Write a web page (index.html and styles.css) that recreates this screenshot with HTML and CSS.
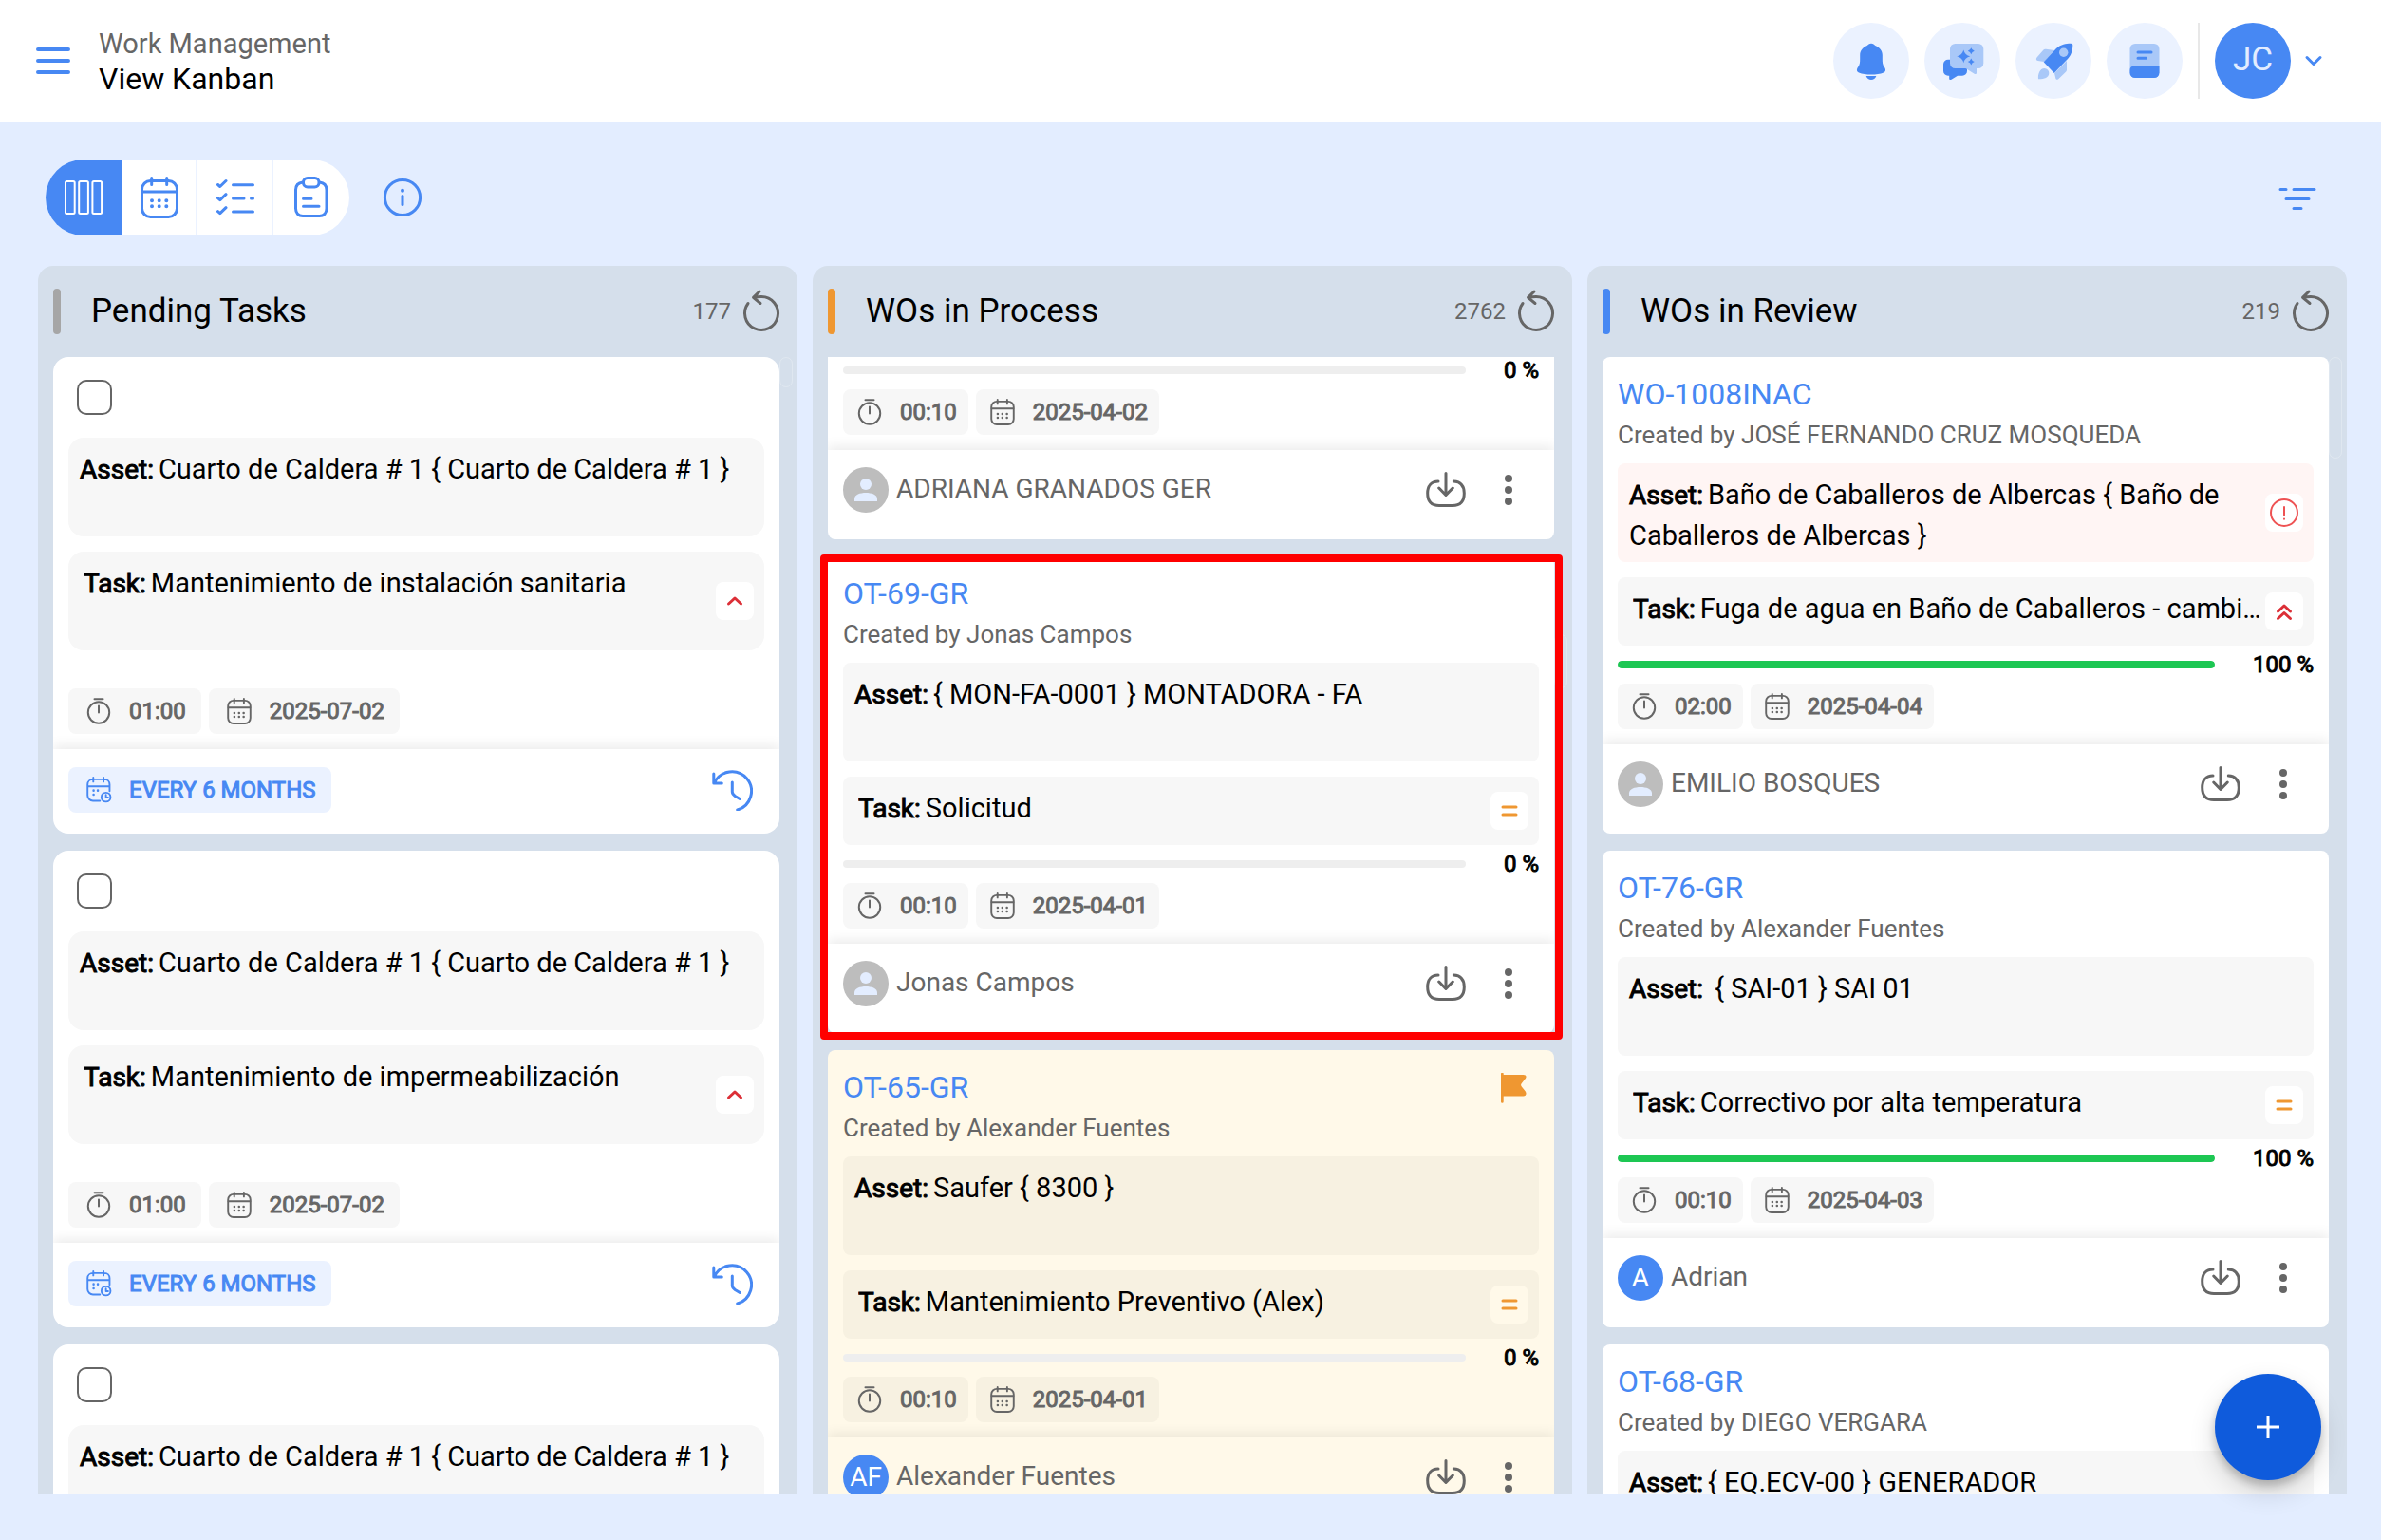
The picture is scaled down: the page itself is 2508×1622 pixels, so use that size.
FILE: index.html
```html
<!DOCTYPE html>
<html lang="en">
<head>
    <meta charset="UTF-8">
    <title>Work Management - View Kanban</title>
    <link rel="stylesheet" href="styles.css">
</head>
<body>
    <!-- shared icons -->
    <svg class="sprite" aria-hidden="true">
        <symbol id="i-reload" viewBox="0 0 48 48">
            <path d="M16 9.3Q20 8.5 24 8.5A17.5 17.5 0 1 1 10 15.5M22 3L15.5 9.3L23 15.5"/>
        </symbol>
        <symbol id="i-calendar" viewBox="0 0 40 44">
            <rect x="1.5" y="4.5" width="37" height="38" rx="9"/>
            <path d="M11.7 1.5v7M27.7 1.5v7M2 16h36"/>
            <path class="dots" d="M12 25.3h.01M19.7 25.3h.01M27.3 25.3h.01M12 31.3h.01M19.7 31.3h.01M27.3 31.3h.01"/>
        </symbol>
        <symbol id="i-calendar-clock" viewBox="0 0 40 44">
            <path d="M38 24V13c0-5-3.500-8.500-8.500-8.500H10.500c-5 0-9 3.500-9 8.500v18c0 5 4 9 9 9H22M11 1.500v7M28 1.500v7M2 16h36"/>
            <path class="dots" d="M11.500 23h.01M18.500 23h.01M11.500 30h.01"/>
            <circle cx="32" cy="34" r="7.500"/>
            <path d="M32 30v4.500h3.500"/>
        </symbol>
        <symbol id="i-timer" viewBox="0 0 28 28">
            <path d="M9.500 1.200h9M14 8.500v7"/>
            <circle cx="14" cy="15.500" r="11.200"/>
        </symbol>
        <symbol id="i-history" viewBox="0 0 44 44">
            <path d="M2.800 5v10h8.500M3.500 14.500A20.500 20.500 0 1 1 27.700 43M22.300 14v10c0 2 1 3 3 4.500l5 3"/>
        </symbol>
        <symbol id="i-download" viewBox="0 0 42 38">
            <path d="M13 10C5.500 10 1.700 15 1.700 22.500C1.700 31 5.500 35.500 14 35.500H28c8.500 0 12.300-4.500 12.300-13C40.300 15 36.500 10.200 29.300 10M21 1.500v22.500M13.700 17l7.300 7.500 7.300-7.500"/>
        </symbol>
        <symbol id="i-more" viewBox="0 0 16 34">
            <circle cx="8" cy="5" r="4"/><circle cx="8" cy="17" r="4"/><circle cx="8" cy="29" r="4"/>
        </symbol>
        <symbol id="i-high" viewBox="0 0 40 40"><path d="M13.500 23l6.500-6 6.500 6"/></symbol>
        <symbol id="i-highest" viewBox="0 0 40 40"><path d="M13.500 20l6.500-6 6.500 6M13.500 27.500l6.500-6 6.500 6"/></symbol>
        <symbol id="i-medium" viewBox="0 0 40 40"><path d="M13 16h14M13 24h14"/></symbol>
        <symbol id="i-alert" viewBox="0 0 40 40"><circle cx="20" cy="20" r="14"/><path d="M20 14v8.500M20 26.500v.2"/></symbol>
        <symbol id="i-person" viewBox="0 0 48 48">
            <circle cx="24" cy="18" r="6"/><path d="M12 36v-2.500c0-4.500 6-6.500 12-6.500s12 2 12 6.500V36z"/>
        </symbol>
        <symbol id="i-flag" viewBox="0 0 28 32">
            <path d="M0 1a1.300 1.300 0 0 1 2.700 0v1H23.500c3 0 3.800 2 2.300 4l-4 5c-1 1.200-1 2.300 0 3.500l4 5c1.500 2.500.7 5-2.300 5H2.700v6a1.300 1.300 0 0 1-2.700 0z"/>
        </symbol>
    </svg>

    <header class="topbar">
        <button class="icon-btn menu-btn" aria-label="Menu">
            <svg width="36" height="30" viewBox="0 0 36 30"><path d="M2 3h32M2 15h32M2 27h32"/></svg>
        </button>
        <div class="page-title">
            <p>Work Management</p>
            <h1>View Kanban</h1>
        </div>
        <div class="top-actions">
            <button class="round-btn" aria-label="Notifications">
                <svg viewBox="0 0 40 40">
                    <path class="dark" d="M20 1.800c2 0 3.300 1 4.300 2.300C28.800 6 31.800 9.500 31.800 14v4c0 4 .2 6 2 8.500 2 3 1.500 5-.8 6C29.500 34 25 34.500 20 34.500S10.500 34 7 32.500c-2.300-1-2.800-3-.8-6 1.800-2.500 2-4.500 2-8.500v-4c0-4.500 3-8 7.500-9.900C16.700 2.800 18 1.800 20 1.800z"/>
                    <path class="dark" d="M14.600 36h10.800c-1 2.700-3 4-5.400 4s-4.400-1.300-5.400-4z"/>
                </svg>
            </button>
            <button class="round-btn" aria-label="Assistant">
                <svg viewBox="0 0 40 40">
                    <path class="dark" d="M5 18.700h15a5 5 0 0 1 5 5v7a5 5 0 0 1-5 5h-5L8.500 39.700c-1.200.7-2.300.3-2.300-1v-3H5a5 5 0 0 1-5-5v-7a5 5 0 0 1 5-5z"/>
                    <path class="light" d="M12.500 2h24.300a5.500 5.500 0 0 1 5.500 5.500v15a5.500 5.500 0 0 1-5.500 5.500H35v4.500c0 1.500-1 2-2.300 1.300L23.500 28h-11A5.500 5.500 0 0 1 7 22.500v-15A5.500 5.500 0 0 1 12.500 2z"/>
                    <path class="dark" d="M21.300 8.500q1.300 5.500 7 6.800q-5.700 1.300-7 7q-1.300-5.700-7-7q5.700-1.300 7-6.800zM29.300 6.200q.8 2.700 3.500 3.500q-2.700.8-3.500 3.500q-.8-2.700-3.500-3.500q2.700-.8 3.500-3.500zM29.300 17.500q.8 2.700 3.500 3.500q-2.700.8-3.500 3.500q-.8-2.700-3.500-3.500q2.700-.8 3.500-3.500z"/>
                </svg>
            </button>
            <button class="round-btn" aria-label="Getting started">
                <svg viewBox="0 0 40 40">
                    <path class="light" d="M10 21L3.500 20c-2-.5-2-2-1-3.500l7-8c.6-.8 1.500-1 2.500-.8l9 1.300zM21 33l13-13v9.500c0 .8-.2 1.500-.8 2l-8 7.700c-1.200 1-2.500.8-2.900-.7zM4 39.300C3.500 34 5.500 28 10.500 28a5 5 0 0 1 4.800 5c0 5-5.800 6.500-11.300 6.300z"/>
                    <path class="dark" d="M9.700 21.300L23 7c5-4.500 10-5.300 15-5.300 2 0 2.300.8 2.300 2.300-.3 6-1.800 10-5.300 14L20.700 33z"/>
                    <circle class="light" cx="30.700" cy="11.300" r="4.700"/>
                </svg>
            </button>
            <button class="round-btn" aria-label="Documentation">
                <svg viewBox="0 0 40 40">
                    <rect class="light" x="4.500" y="2" width="31" height="36" rx="5.500"/>
                    <path class="dark" d="M9 25.500h26.500v7a5.500 5.500 0 0 1-5.500 5.500H10a5.500 5.500 0 0 1-5.500-5.500V30c0-3 1.500-4.500 4.500-4.500z"/>
                    <path class="line" d="M13 11h14M13 17.300h8.500"/>
                </svg>
            </button>
            <button class="account">
                <span class="account-avatar">JC</span>
                <svg width="18" height="12" viewBox="0 0 18 12"><path d="M2 2.500l7 7 7-7"/></svg>
            </button>
        </div>
    </header>

    <main>
        <div class="toolbar">
            <div class="view-switch">
                <button class="active" aria-label="Kanban">
                    <svg width="40" height="40" viewBox="0 0 40 40"><rect x="1" y="3" width="9.700" height="34" rx="1.500"/><rect x="15.200" y="3" width="9.700" height="34" rx="1.500"/><rect x="29.400" y="3" width="9.700" height="34" rx="1.500"/></svg>
                </button>
                <button aria-label="Calendar"><svg width="40" height="44"><use href="#i-calendar"/></svg></button>
                <button aria-label="List">
                    <svg width="40" height="40" viewBox="0 0 40 40"><path d="M1.500 6.500l2.300 2L10 2.500M17.500 6.700H38.500M1.500 20.700l2.300 2L10 16.700M17.500 21H29M36.500 21h2M1.500 34.700l2.300 2L10 30.700M17.500 35H38.500"/></svg>
                </button>
                <button aria-label="Requests">
                    <svg width="36" height="44" viewBox="0 0 36 44"><rect x="9.500" y="1.500" width="16.500" height="9.500" rx="4.500"/><path d="M9 6C4 6.500 1.500 9 1.500 14v19.500c0 5 3 8 7.500 8h17.500c4.500 0 7.500-3 7.500-8V14c0-5-2.500-7.500-7.500-8M9.500 23.300H18M9.500 31.300h16.500"/></svg>
                </button>
            </div>
            <button class="icon-btn info-btn" aria-label="Information">
                <svg width="40" height="40" viewBox="0 0 40 40"><circle cx="20" cy="20" r="18.600"/><path d="M20 18.500v9"/><circle class="dot" cx="20" cy="12.700" r="2"/></svg>
            </button>
            <button class="icon-btn filter-btn" aria-label="Filters">
                <svg width="40" height="26" viewBox="0 0 40 26"><path d="M2 4.500h6M16 4.500h22M8 14.500h24M16 24.500h8"/></svg>
            </button>
        </div>

        <div class="board">
            <!-- Pending -->
            <section class="column pending">
                <div class="column-head">
                    <h2>Pending Tasks</h2>
                    <span class="count">177</span>
                    <button class="icon-btn reload" aria-label="Reload"><svg width="48" height="48"><use href="#i-reload"/></svg></button>
                </div>
                <div class="scroll-thumb" style="top: 96px; height: 32px"></div>
                <div class="card-list">
                    <article class="card">
                        <label class="select"><input type="checkbox" aria-label="Select task"></label>
                        <div class="field asset"><p><b>Asset:</b>Cuarto de Caldera # 1 { Cuarto de Caldera # 1 }</p></div>
                        <div class="field task"><p><b>Task:</b>Mantenimiento de instalación sanitaria</p><svg class="badge red"><use href="#i-high"/></svg></div>
                        <div class="chips">
                            <span class="chip"><svg><use href="#i-timer"/></svg>01:00</span>
                            <span class="chip"><svg class="cal"><use href="#i-calendar"/></svg>2025-07-02</span>
                        </div>
                        <footer>
                            <span class="chip period"><svg class="cal"><use href="#i-calendar-clock"/></svg>EVERY 6 MONTHS</span>
                            <button class="icon-btn history" aria-label="History"><svg width="44" height="44"><use href="#i-history"/></svg></button>
                        </footer>
                    </article>
                    <article class="card">
                        <label class="select"><input type="checkbox" aria-label="Select task"></label>
                        <div class="field asset"><p><b>Asset:</b>Cuarto de Caldera # 1 { Cuarto de Caldera # 1 }</p></div>
                        <div class="field task"><p><b>Task:</b>Mantenimiento de impermeabilización</p><svg class="badge red"><use href="#i-high"/></svg></div>
                        <div class="chips">
                            <span class="chip"><svg><use href="#i-timer"/></svg>01:00</span>
                            <span class="chip"><svg class="cal"><use href="#i-calendar"/></svg>2025-07-02</span>
                        </div>
                        <footer>
                            <span class="chip period"><svg class="cal"><use href="#i-calendar-clock"/></svg>EVERY 6 MONTHS</span>
                            <button class="icon-btn history" aria-label="History"><svg width="44" height="44"><use href="#i-history"/></svg></button>
                        </footer>
                    </article>
                    <article class="card">
                        <label class="select"><input type="checkbox" aria-label="Select task"></label>
                        <div class="field asset"><p><b>Asset:</b>Cuarto de Caldera # 1 { Cuarto de Caldera # 1 }</p></div>
                    </article>
                </div>
            </section>

            <!-- In process -->
            <section class="column process">
                <div class="column-head">
                    <h2>WOs in Process</h2>
                    <span class="count">2762</span>
                    <button class="icon-btn reload" aria-label="Reload"><svg width="48" height="48"><use href="#i-reload"/></svg></button>
                </div>
                <div class="scroll-thumb" style="top: 388px; height: 57px"></div>
                <div class="card-list" id="processList">
                    <article class="card">
                        <div class="card-head"></div>
                        <div class="field asset"></div>
                        <div class="field task"></div>
                        <div class="progress"><div class="track"><div class="fill" style="width: 0%"></div></div><span>0 %</span></div>
                        <div class="chips">
                            <span class="chip"><svg><use href="#i-timer"/></svg>00:10</span>
                            <span class="chip"><svg class="cal"><use href="#i-calendar"/></svg>2025-04-02</span>
                        </div>
                        <footer>
                            <span class="avatar"><svg><use href="#i-person"/></svg></span>
                            <span class="name">ADRIANA GRANADOS GER</span>
                            <button class="icon-btn download" aria-label="Download"><svg width="42" height="38"><use href="#i-download"/></svg></button>
                            <button class="icon-btn more" aria-label="More"><svg width="16" height="34"><use href="#i-more"/></svg></button>
                        </footer>
                    </article>
                    <div class="highlight">
                        <article class="card">
                            <div class="card-head">
                                <h3><a href="#">OT-69-GR</a></h3>
                                <p>Created by Jonas Campos</p>
                            </div>
                            <div class="field asset"><p><b>Asset:</b>{ MON-FA-0001 } MONTADORA - FA</p></div>
                            <div class="field task"><p><b>Task:</b>Solicitud</p><svg class="badge orange"><use href="#i-medium"/></svg></div>
                            <div class="progress"><div class="track"><div class="fill" style="width: 0%"></div></div><span>0 %</span></div>
                            <div class="chips">
                                <span class="chip"><svg><use href="#i-timer"/></svg>00:10</span>
                                <span class="chip"><svg class="cal"><use href="#i-calendar"/></svg>2025-04-01</span>
                            </div>
                            <footer>
                                <span class="avatar"><svg><use href="#i-person"/></svg></span>
                                <span class="name">Jonas Campos</span>
                                <button class="icon-btn download" aria-label="Download"><svg width="42" height="38"><use href="#i-download"/></svg></button>
                                <button class="icon-btn more" aria-label="More"><svg width="16" height="34"><use href="#i-more"/></svg></button>
                            </footer>
                        </article>
                    </div>
                    <article class="card flagged">
                        <svg class="flag"><use href="#i-flag"/></svg>
                        <div class="card-head">
                            <h3><a href="#">OT-65-GR</a></h3>
                            <p>Created by Alexander Fuentes</p>
                        </div>
                        <div class="field asset"><p><b>Asset:</b>Saufer { 8300 }</p></div>
                        <div class="field task"><p><b>Task:</b>Mantenimiento Preventivo (Alex)</p><svg class="badge orange"><use href="#i-medium"/></svg></div>
                        <div class="progress"><div class="track"><div class="fill" style="width: 0%"></div></div><span>0 %</span></div>
                        <div class="chips">
                            <span class="chip"><svg><use href="#i-timer"/></svg>00:10</span>
                            <span class="chip"><svg class="cal"><use href="#i-calendar"/></svg>2025-04-01</span>
                        </div>
                        <footer>
                            <span class="avatar initials">AF</span>
                            <span class="name">Alexander Fuentes</span>
                            <button class="icon-btn download" aria-label="Download"><svg width="42" height="38"><use href="#i-download"/></svg></button>
                            <button class="icon-btn more" aria-label="More"><svg width="16" height="34"><use href="#i-more"/></svg></button>
                        </footer>
                    </article>
                </div>
            </section>

            <!-- In review -->
            <section class="column review">
                <div class="column-head">
                    <h2>WOs in Review</h2>
                    <span class="count">219</span>
                    <button class="icon-btn reload" aria-label="Reload"><svg width="48" height="48"><use href="#i-reload"/></svg></button>
                </div>
                <div class="scroll-thumb" style="top: 96px; height: 107px"></div>
                <div class="card-list">
                    <article class="card">
                        <div class="card-head">
                            <h3><a href="#">WO-1008INAC</a></h3>
                            <p>Created by JOSÉ FERNANDO CRUZ MOSQUEDA</p>
                        </div>
                        <div class="field asset stopped"><p><b>Asset:</b>Baño de Caballeros de Albercas { Baño de Caballeros de Albercas }</p><svg class="badge alert"><use href="#i-alert"/></svg></div>
                        <div class="field task"><p><b>Task:</b>Fuga de agua en Baño de Caballeros - cambio de llave</p><svg class="badge red"><use href="#i-highest"/></svg></div>
                        <div class="progress"><div class="track"><div class="fill" style="width: 100%"></div></div><span>100 %</span></div>
                        <div class="chips">
                            <span class="chip"><svg><use href="#i-timer"/></svg>02:00</span>
                            <span class="chip"><svg class="cal"><use href="#i-calendar"/></svg>2025-04-04</span>
                        </div>
                        <footer>
                            <span class="avatar"><svg><use href="#i-person"/></svg></span>
                            <span class="name">EMILIO BOSQUES</span>
                            <button class="icon-btn download" aria-label="Download"><svg width="42" height="38"><use href="#i-download"/></svg></button>
                            <button class="icon-btn more" aria-label="More"><svg width="16" height="34"><use href="#i-more"/></svg></button>
                        </footer>
                    </article>
                    <article class="card">
                        <div class="card-head">
                            <h3><a href="#">OT-76-GR</a></h3>
                            <p>Created by Alexander Fuentes</p>
                        </div>
                        <div class="field asset"><p><b>Asset:</b>&nbsp;{ SAI-01 } SAI 01</p></div>
                        <div class="field task"><p><b>Task:</b>Correctivo por alta temperatura</p><svg class="badge orange"><use href="#i-medium"/></svg></div>
                        <div class="progress"><div class="track"><div class="fill" style="width: 100%"></div></div><span>100 %</span></div>
                        <div class="chips">
                            <span class="chip"><svg><use href="#i-timer"/></svg>00:10</span>
                            <span class="chip"><svg class="cal"><use href="#i-calendar"/></svg>2025-04-03</span>
                        </div>
                        <footer>
                            <span class="avatar initials">A</span>
                            <span class="name">Adrian</span>
                            <button class="icon-btn download" aria-label="Download"><svg width="42" height="38"><use href="#i-download"/></svg></button>
                            <button class="icon-btn more" aria-label="More"><svg width="16" height="34"><use href="#i-more"/></svg></button>
                        </footer>
                    </article>
                    <article class="card">
                        <div class="card-head">
                            <h3><a href="#">OT-68-GR</a></h3>
                            <p>Created by DIEGO VERGARA</p>
                        </div>
                        <div class="field asset"><p><b>Asset:</b>{ EQ.ECV-00 } GENERADOR</p></div>
                    </article>
                </div>
            </section>
        </div>
    </main>

    <button class="fab" aria-label="Add">
        <svg width="24" height="24" viewBox="0 0 24 24"><path d="M12 0v24M0 12h24"/></svg>
    </button>

    <script>
        // the in-process list opens part way down its first card
        document.getElementById('processList').scrollTop = 310;
    </script>
</body>
</html>
```

FILE: styles.css
```css
* {
    box-sizing: border-box;
}
body {
    margin: 0;
    height: 100vh;
    display: flex;
    flex-direction: column;
    background-color: #e3edff;
    font-family: Roboto, "Liberation Sans", sans-serif;
    font-size: 28px;
    color: #000;
}
h1, h2, h3, p {
    margin: 0;
    font-weight: 400;
}
button {
    font: inherit;
    color: inherit;
    border: 0;
    padding: 0;
    background: none;
    cursor: pointer;
}
svg {
    display: block;
    flex-shrink: 0;
    fill: none;
    stroke: currentColor;
    stroke-linecap: round;
    stroke-linejoin: round;
    overflow: visible;
}
.sprite {
    position: absolute;
    width: 0;
    height: 0;
}
.dots {
    stroke-width: 4px;
}
.icon-btn {
    color: #4788f3;
}

/* top bar */
.topbar {
    display: flex;
    align-items: center;
    height: 128px;
    flex-shrink: 0;
    padding: 0 62px 0 38px;
    background-color: #fff;
}
.menu-btn {
    margin-right: 30px;
    stroke-width: 4px;
}
.page-title {
    padding-top: 2px;
    line-height: 37px;
}
.page-title p {
    font-size: 29px;
    color: #666;
}
.page-title h1 {
    font-size: 32px;
}
.top-actions {
    display: flex;
    align-items: center;
    gap: 16px;
    margin-left: auto;
}
.round-btn {
    width: 80px;
    height: 80px;
    border-radius: 50%;
    background-color: #ebf2ff;
}
.round-btn svg {
    width: 40px;
    height: 40px;
    margin: 0 auto;
    stroke: none;
}
.round-btn .dark {
    fill: #4788f3;
}
.round-btn .light {
    fill: #a9c8f8;
}
.round-btn .line {
    stroke: #4788f3;
    stroke-width: 3px;
}
.account {
    display: flex;
    align-items: center;
    gap: 15px;
    padding-left: 16px;
    border-left: 2px solid #e8e8e8;
    color: #4788f3;
    stroke-width: 3px;
}
.account-avatar {
    width: 80px;
    border-radius: 50%;
    background-color: #4788f3;
    color: #e3edff;
    font-size: 35px;
    line-height: 78px;
    padding-bottom: 2px;
}

/* toolbar */
main {
    display: flex;
    flex-direction: column;
    flex: 1;
    min-height: 0;
    padding: 40px 36px 48px 40px;
}
.toolbar {
    display: flex;
    align-items: center;
    margin-bottom: 32px;
    padding: 0 32px 0 8px;
}
.view-switch {
    display: flex;
    border-radius: 40px;
    overflow: hidden;
    background-color: #fff;
}
.view-switch button {
    width: 80px;
    height: 80px;
    box-shadow: inset -2px 0 #ebf2ff;
    color: #4788f3;
    stroke-width: 3px;
}
.view-switch button:last-child {
    box-shadow: none;
}
.view-switch button.active {
    box-shadow: none;
    background-color: #4788f3;
    color: #fff;
    stroke-width: 2px;
}
.view-switch svg {
    margin: 0 auto;
}
.info-btn {
    margin-left: 36px;
    stroke-width: 3px;
}
.info-btn .dot {
    fill: #4788f3;
    stroke: none;
}
.filter-btn {
    margin-left: auto;
    stroke-width: 3px;
}

/* board */
.board {
    display: grid;
    grid-template-columns: repeat(3, minmax(0, 1fr));
    grid-template-rows: 100%;
    gap: 16px;
    flex: 1;
    min-height: 0;
}
.column {
    position: relative;
    display: flex;
    flex-direction: column;
    border-radius: 16px 16px 0 0;
    background-color: #d5dfeb;
}
.column-head {
    display: flex;
    align-items: center;
    height: 96px;
    flex-shrink: 0;
    padding: 0 14px 0 16px;
}
.column-head::before {
    content: "";
    width: 8px;
    height: 48px;
    margin-right: 32px;
    border-radius: 4px;
    background-color: #a6a6a6;
}
.process .column-head::before {
    background-color: #ef9731;
}
.review .column-head::before {
    background-color: #4788f3;
}
.column-head h2 {
    font-size: 35px;
    line-height: 40px;
}
.count {
    margin-left: auto;
    margin-right: 8px;
    font-size: 24px;
    color: #666;
}
.reload {
    color: #666;
    stroke-width: 3px;
}
.scroll-thumb {
    position: absolute;
    right: 5px;
    width: 14px;
    border: 1px solid rgba(255, 255, 255, 0.25);
    border-radius: 7px;
}
.card-list {
    display: flex;
    flex-direction: column;
    gap: 18px;
    flex: 1;
    min-height: 0;
    padding: 0 19px 0 16px;
    overflow-y: auto;
    scrollbar-width: none;
}

/* cards */
.card {
    position: relative;
    flex-shrink: 0;
    padding: 20px 16px 0;
    border-radius: 8px;
    background-color: #fff;
    overflow: hidden;
}
.highlight {
    position: relative;
    flex-shrink: 0;
}
.highlight::after {
    content: "";
    position: absolute;
    inset: -2px -9px -7px -8px;
    border: 8px solid #f00;
    border-radius: 4px;
}
.card-head {
    display: flex;
    flex-direction: column;
    gap: 6px;
    height: 92px;
}
.card h3 {
    font-size: 32px;
    line-height: 38px;
}
.card h3 a {
    color: #4788f3;
    text-decoration: none;
}
.card-head p {
    font-size: 26px;
    line-height: 36px;
    color: #666;
}
.flag {
    position: absolute;
    top: 24px;
    right: 28px;
    width: 28px;
    height: 32px;
    fill: #ef9731;
    stroke: none;
}
.field {
    display: flex;
    align-items: center;
    gap: 4px;
    margin-bottom: 16px;
    padding: 0 11px 0 12px;
    border-radius: 8px;
    background-color: #f7f7f7;
    font-size: 29px;
    line-height: 43px;
}
.field p {
    flex: 1;
    align-self: flex-start;
    padding-top: 12px;
}
.field b {
    margin-right: 5px;
    font-size: 28px;
    font-weight: 400;
    -webkit-text-stroke: 1px currentColor;
}
.asset {
    height: 104px;
}
.task {
    height: 72px;
    padding-left: 16px;
}
.task p {
    overflow: hidden;
    white-space: nowrap;
    text-overflow: ellipsis;
}
.stopped {
    background-color: #fff5f4;
}
.badge {
    width: 40px;
    height: 40px;
    border-radius: 8px;
    background-color: #fff;
    stroke-width: 3px;
}
.red {
    color: #dc2f37;
}
.orange {
    color: #ef9731;
}
.alert {
    color: #ee5253;
    stroke-width: 2px;
}
.progress {
    display: flex;
    align-items: center;
    gap: 40px;
    margin: -8px 0 8px;
    font-size: 24px;
    line-height: 24px;
}
.progress span {
    -webkit-text-stroke: 1px currentColor;
}
.track {
    flex: 1;
    height: 8px;
    border-radius: 4px;
    background-color: #eee;
    overflow: hidden;
}
.fill {
    height: 8px;
    border-radius: 4px;
    background-color: #1dc753;
}
.chips {
    display: flex;
    gap: 8px;
    margin-bottom: 16px;
}
.chip {
    display: flex;
    align-items: center;
    gap: 18px;
    height: 48px;
    padding: 0 12px 0 14px;
    border-radius: 8px;
    background-color: #f7f7f7;
    color: #666;
    font-size: 24px;
    stroke-width: 2px;
    -webkit-text-stroke: 1px currentColor;
}
.chip svg {
    width: 28px;
    height: 28px;
}
.chip .cal {
    stroke-width: 3px;
}
.card footer {
    display: flex;
    align-items: center;
    height: 94px;
    margin: 0 -16px;
    padding: 0 40px 10px 16px;
    box-shadow: 0 -4px 12px rgba(0, 0, 0, 0.08);
}
.avatar {
    width: 48px;
    height: 48px;
    border-radius: 50%;
    background-color: #bdbdbd;
}
.avatar svg {
    width: 48px;
    height: 48px;
    fill: #e3edff;
    stroke: none;
}
.initials {
    background-color: #4788f3;
    color: #fff;
    line-height: 48px;
    text-align: center;
}
.name {
    padding: 0 0 4px 8px;
    color: #666;
}
.download {
    margin-left: auto;
    color: #666;
    stroke-width: 3px;
}
.more {
    margin-left: 37px;
    color: #666;
}
.more svg {
    fill: currentColor;
    stroke: none;
}
.flagged, .flagged .badge {
    background-color: #fff9e9;
}
.flagged .field, .flagged .chip {
    background-color: #f7f1e1;
}

/* pending cards are rounder and start with a tick box */
.pending .card {
    padding-top: 24px;
    border-radius: 16px;
}
.select {
    display: block;
    height: 61px;
    padding-left: 9px;
}
.select input {
    appearance: none;
    display: block;
    width: 37px;
    height: 37px;
    margin: 0;
    border: 2px solid #666;
    border-radius: 10px;
    background-color: #fff;
}
.pending .field {
    border-radius: 16px;
}
.pending .task {
    height: 104px;
    margin-bottom: 40px;
}
.pending .chip {
    padding: 0 16px 0 18px;
}
.pending .period {
    background-color: #ebf2ff;
    color: #4788f3;
}
.pending footer {
    height: 89px;
    padding: 0 28px 3px 16px;
}
.history {
    margin-left: auto;
    stroke-width: 3px;
}

.fab {
    position: fixed;
    right: 63px;
    bottom: 63px;
    width: 112px;
    height: 112px;
    border-radius: 50%;
    background-color: #0f5bdc;
    color: #fff;
    stroke-width: 3px;
    box-shadow: 0 6px 10px rgba(0, 0, 0, 0.2), 0 12px 28px rgba(0, 0, 0, 0.16);
}
.fab svg {
    margin: 0 auto;
    stroke-linecap: butt;
}
```
